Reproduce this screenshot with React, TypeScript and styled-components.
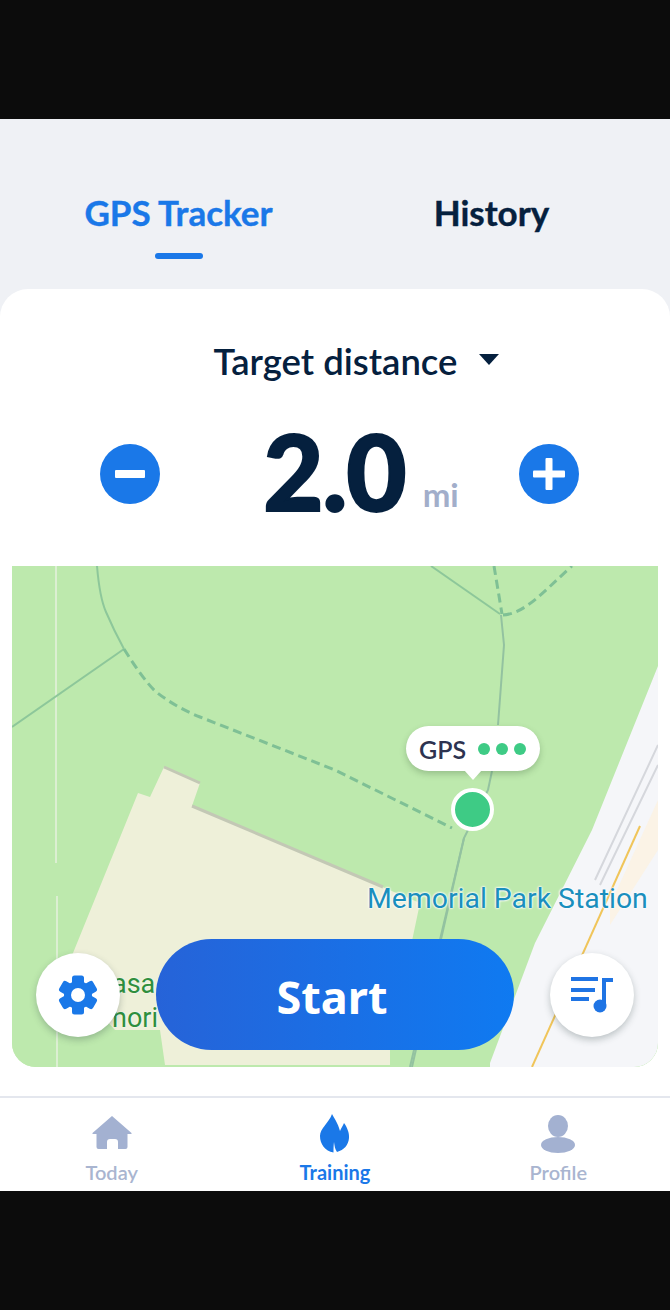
import React from "react";
import styled, { createGlobalStyle } from "styled-components";

const Global = createGlobalStyle`
  html, body { margin: 0; padding: 0; background: #0c0c0c; }
  body { font-family: "Lato", "Noto Sans", sans-serif; }
`;

const Page = styled.div`
  width: 670px;
  height: 1310px;
  background: #0c0c0c;
  padding: 119px 0;
  box-sizing: border-box;
`;

const Screen = styled.main`
  height: 1072px;
  background: #eff1f5;
  display: flex;
  flex-direction: column;
`;

const Tabs = styled.nav`
  height: 170px;
  padding: 0 22px;
  display: grid;
  grid-template-columns: 1fr 1fr;
  box-sizing: border-box;
`;

const Tab = styled.div<{ $active?: boolean }>`
  display: flex;
  flex-direction: column;
  align-items: center;
  padding-top: 73px;
  font-size: 35px;
  font-weight: 700;
  line-height: 41px;
  -webkit-text-stroke: 0.4px currentColor;
  color: ${(p) => (p.$active ? "#1a78e8" : "#05203e")};
`;

const TabBar = styled.span`
  width: 48px;
  height: 6px;
  margin-top: 20px;
  border-radius: 3px;
  background: #1a78e8;
`;

const Card = styled.section`
  flex: 1;
  background: #fff;
  border-radius: 28px 28px 0 0;
  padding: 32px 12px 0;
  display: flex;
  flex-direction: column;
`;

const TargetRow = styled.div`
  height: 80px;
  padding-left: 43px;
  display: flex;
  align-items: center;
  justify-content: center;
  gap: 22px;
  font-size: 36.5px;
  font-weight: 600;
  color: #05203e;
  box-sizing: border-box;
`;

const Caret = styled.span`
  width: 0;
  height: 0;
  border-left: 10px solid transparent;
  border-right: 10px solid transparent;
  border-top: 11px solid #05203e;
  margin-bottom: 4px;
`;

const Stepper = styled.div`
  height: 165px;
  box-sizing: border-box;
  padding: 0 79px 20px 88px;
  display: flex;
  align-items: center;
  justify-content: space-between;
`;

const RoundButton = styled.button`
  width: 60px;
  height: 60px;
  padding: 0;
  border: 0;
  border-radius: 50%;
  background: #1a78e8;
  display: flex;
  align-items: center;
  justify-content: center;
`;

const Value = styled.div`
  margin: 0 0 6px 43px;
  display: flex;
  align-items: flex-end;
  gap: 17px;
  color: #05203e;
`;

const BigNumber = styled.span`
  font-size: 104px;
  font-weight: 900;
  line-height: 1;
  letter-spacing: -1px;
  -webkit-text-stroke: 2px #05203e;
`;

const Unit = styled.span`
  margin-bottom: 12px;
  font-size: 33px;
  line-height: 1;
  font-weight: 700;
  color: #a2aeca;
`;

const MapArea = styled.div`
  position: relative;
  height: 501px;
  border-radius: 0 0 24px 24px;
  overflow: hidden;
  background: #bde9ad;
`;

const MapArt = styled.svg`
  display: block;
  width: 646px;
  height: 501px;
`;

const StationLabel = styled.span`
  position: absolute;
  left: 355px;
  top: 316px;
  font-family: "Roboto", sans-serif;
  font-size: 28.4px;
  line-height: 34px;
  white-space: nowrap;
  color: #1a8fbd;
  text-shadow: 0 0 2px #fff, 0 0 2px #fff, 0 0 3px #fff;
`;

const PlaceLabel = styled.span`
  position: absolute;
  left: 100px;
  top: 401px;
  width: 60px;
  font-family: "Roboto", sans-serif;
  font-size: 27px;
  line-height: 34px;
  color: #2f8f3d;
  text-shadow: 0 0 2px #fff;
`;

const Bubble = styled.div`
  position: absolute;
  left: 394px;
  top: 160px;
  width: 134px;
  height: 45px;
  box-sizing: border-box;
  padding-left: 13px;
  border-radius: 23px;
  background: #fff;
  box-shadow: 0 3px 6px rgba(40, 70, 40, 0.25);
  display: flex;
  align-items: center;
  gap: 12px;
  font-size: 25px;
  font-weight: 600;
  color: #2d3350;

  &::after {
    content: "";
    position: absolute;
    left: 58px;
    bottom: -9px;
    border-left: 9px solid transparent;
    border-right: 9px solid transparent;
    border-top: 10px solid #fff;
  }
`;

const Dots = styled.span`
  display: flex;
  gap: 6px;
`;

const Dot = styled.i`
  width: 12px;
  height: 12px;
  border-radius: 50%;
  background: #3ecb85;
`;

const Marker = styled.span`
  position: absolute;
  left: 439px;
  top: 222px;
  width: 35px;
  height: 35px;
  border: 4px solid #fff;
  border-radius: 50%;
  background: #3ecb85;
`;

const Controls = styled.div`
  position: absolute;
  left: 24px;
  right: 24px;
  top: 373px;
  display: flex;
  align-items: center;
  justify-content: space-between;
`;

const FloatButton = styled.button`
  width: 84px;
  height: 84px;
  padding: 0;
  border: 0;
  border-radius: 50%;
  background: #fff;
  box-shadow: 0 3px 7px rgba(40, 60, 60, 0.28);
  display: flex;
  align-items: center;
  justify-content: center;
`;

const StartButton = styled.button`
  width: 358px;
  height: 111px;
  padding: 3px 6px 0 0;
  border: 0;
  border-radius: 56px;
  background: linear-gradient(90deg, #2663d8 0%, #0f7af1 100%);
  color: #fff;
  font-family: "Noto Sans", sans-serif;
  font-size: 45px;
  font-weight: 700;
`;

const BottomNav = styled.nav`
  height: 95px;
  background: #fff;
  border-top: 2px solid #e4e7ee;
  box-sizing: border-box;
  display: grid;
  grid-template-columns: repeat(3, 1fr);
`;

const NavItem = styled.div<{ $active?: boolean }>`
  display: flex;
  flex-direction: column;
  align-items: center;
  padding-top: 15px;
  font-size: 20px;
  line-height: 24px;
  font-weight: ${(p) => (p.$active ? 700 : 600)};
  color: ${(p) => (p.$active ? "#1a78e8" : "#a9b5d0")};
`;

const NavIcon = styled.svg`
  display: block;
  width: 42px;
  height: 42px;
  margin-bottom: 5px;
`;

const Gear = () => (
  <svg width="44" height="44" viewBox="0 0 44 44">
    {[0, 60, 120, 180, 240, 300].map((a) => (
      <rect key={a} x="16" y="2.5" width="12" height="12" rx="2.5" fill="#1a78e8" transform={`rotate(${a} 22 22)`} />
    ))}
    <circle cx="22" cy="22" r="14" fill="#1a78e8" />
    <circle cx="22" cy="22" r="7" fill="#fff" />
  </svg>
);

const Music = () => (
  <svg width="46" height="46" viewBox="0 0 46 46" fill="#1f74e4">
    <rect x="2" y="5" width="27" height="4" />
    <rect x="2" y="16" width="24" height="4" />
    <rect x="2" y="25" width="18" height="4" />
    <rect x="33" y="6" width="11" height="4" />
    <rect x="33" y="6" width="4" height="28" />
    <circle cx="31" cy="34" r="6.500" />
  </svg>
);

export default function App() {
  return (
    <Page>
      <Global />
      <Screen>
        <Tabs>
          <Tab $active>
            GPS Tracker
            <TabBar />
          </Tab>
          <Tab>History</Tab>
        </Tabs>
        <Card>
          <TargetRow>
            Target distance
            <Caret />
          </TargetRow>
          <Stepper>
            <RoundButton aria-label="Decrease">
              <svg width="32" height="8" viewBox="0 0 32 8">
                <rect width="30" height="8" x="1" rx="1" fill="#fff" />
              </svg>
            </RoundButton>
            <Value>
              <BigNumber>2.0</BigNumber>
              <Unit>mi</Unit>
            </Value>
            <RoundButton aria-label="Increase">
              <svg width="34" height="34" viewBox="0 0 34 34" fill="#fff">
                <rect x="1" y="13.500" width="32" height="7" rx="1" />
                <rect x="13.500" y="1" width="7" height="32" rx="1" />
              </svg>
            </RoundButton>
          </Stepper>
          <MapArea>
            <MapArt viewBox="12 566 646 501">
              <rect x="12" y="566" width="646" height="501" fill="#bde9ad" />
              <path d="M56 566V863M57 896V1067" stroke="#dcefd2" strokeWidth="2" fill="none" />
              <path d="M12 727L124 649" stroke="#8dc79a" strokeWidth="2" fill="none" />
              <path d="M97 566C99 590 102 603 106 612C112 626 118 638 124 649" stroke="#8dc79a" strokeWidth="2" fill="none" />
              <path d="M124 649C136 668 146 682 155 691C170 703 185 711 200 717L335 770L452 828" stroke="#7fc095" strokeWidth="3" strokeDasharray="9 5" fill="none" />
              <path d="M431 566L500 614" stroke="#8dc79a" strokeWidth="2" fill="none" />
              <path d="M494 566L502 614" stroke="#7fc095" strokeWidth="3" strokeDasharray="9 5" fill="none" />
              <path d="M503 615C525 614 545 590 572 566" stroke="#7fc095" strokeWidth="3" strokeDasharray="9 5" fill="none" />
              <path d="M501 615L504 645L498 725M492 771L488 790L464 838L410 1067" stroke="#93c2a0" strokeWidth="2" fill="none" />
              <path d="M164 767L200 783L192 806L420 903L390 1045V1065H165L160 1030H115L65 975L73 953L123 830L138 793L150 797Z" fill="#eef0d9" />
              <path d="M164 767L200 783M192 806L383 887" stroke="#c3c8b5" strokeWidth="3" fill="none" />
              <path d="M464 838L412 1067" stroke="#93c2a0" strokeWidth="2" fill="none" />
              <path d="M658 666L592 830L535 943L490 1063V1067H658Z" fill="#f5f6f9" />
              <path d="M658 800L610 905V925L658 850Z" fill="#fbf3e6" />
              <path d="M658 745L595 880M658 765L600 885" stroke="#d5d7dc" strokeWidth="2" fill="none" />
              <path d="M640 826L532 1067" stroke="#f0c55a" strokeWidth="2" fill="none" />
            </MapArt>
            <StationLabel>Memorial Park Station</StationLabel>
            <PlaceLabel>asa nori</PlaceLabel>
            <Bubble>
              GPS
              <Dots>
                <Dot />
                <Dot />
                <Dot />
              </Dots>
            </Bubble>
            <Marker />
            <Controls>
              <FloatButton aria-label="Settings">
                <Gear />
              </FloatButton>
              <StartButton>Start</StartButton>
              <FloatButton aria-label="Music">
                <Music />
              </FloatButton>
            </Controls>
          </MapArea>
        </Card>
        <BottomNav>
          <NavItem>
            <NavIcon viewBox="0 0 42 42" fill="#a3b1d1">
              <path d="M21 3L40.500 20V21H36.500V34a2 2 0 0 1-2 2H27V29a3 3 0 0 0-3-3H19a3 3 0 0 0-3 3V36H7.500a2 2 0 0 1-2-2V21H1.500V20Z" />
            </NavIcon>
            Today
          </NavItem>
          <NavItem $active>
            <NavIcon viewBox="0 0 42 42" fill="#1a78e8">
              <path d="M18 1C20 5 24 10 26 18C27 15 29 13 30 10C33 14 35.500 20 35 25C34.500 32 30 37 23 39C21 36 20.500 33 20 29C19.500 33 19.500 36 19.500 39.500C11 38 6 31 6 23C6 15 15 10 18 1Z" />
            </NavIcon>
            Training
          </NavItem>
          <NavItem>
            <NavIcon viewBox="0 0 42 42" fill="#a3b1d1">
              <ellipse cx="21" cy="13" rx="10" ry="11" />
              <ellipse cx="21" cy="32" rx="17" ry="8" />
            </NavIcon>
            Profile
          </NavItem>
        </BottomNav>
      </Screen>
    </Page>
  );
}
